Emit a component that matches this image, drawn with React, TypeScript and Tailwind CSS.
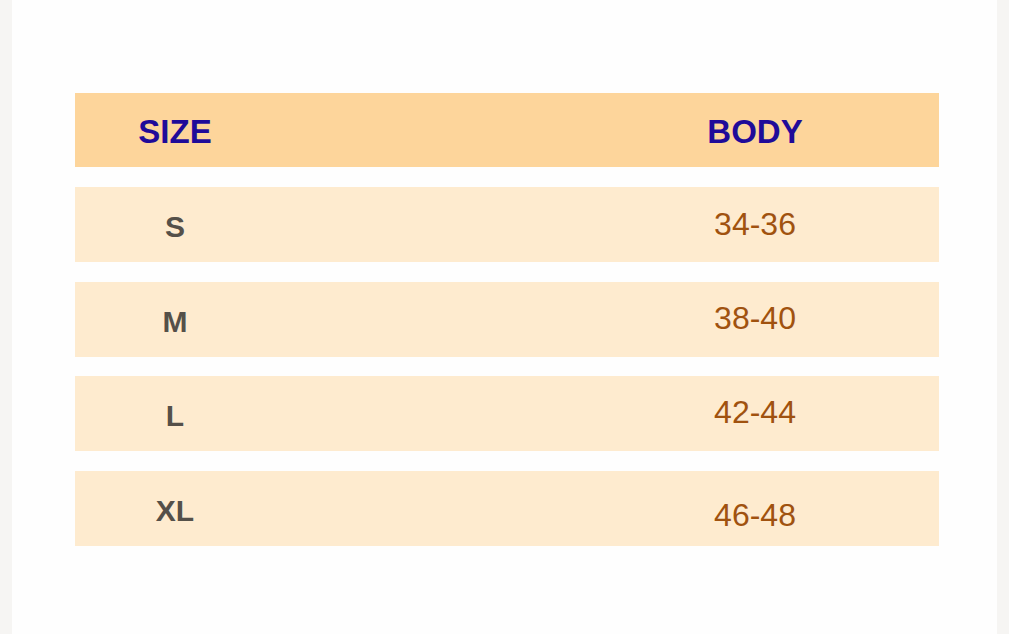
import React from "react";

const rows = [
  { size: "S", body: "34-36", nudge: "-translate-y-[1px]" },
  { size: "M", body: "38-40", nudge: "-translate-y-[1px]" },
  { size: "L", body: "42-44", nudge: "-translate-y-[2px]" },
  { size: "XL", body: "46-48", nudge: "translate-y-[7px]" },
];

export default function App() {
  return (
    <div
      className="flex h-[634px] w-[1009px] bg-[#fefefe]"
      style={{ fontFamily: '"Liberation Sans", Arial, sans-serif' }}
    >
      <div className="w-[12px] bg-[#f6f5f3]" />
      <div className="flex-1 pl-[63px] pr-[58px] pt-[93px]">
        <div className="flex flex-col gap-[19.5px]">
          <div className="mb-[0.5px] flex h-[74px] items-center bg-[#fdd59b]">
            <div className="w-[200px] translate-y-[2px] text-center text-[33px] font-bold text-[#1f0b99]">SIZE</div>
            <div className="ml-[380px] w-[200px] translate-y-[2px] text-center text-[33px] font-bold text-[#1f0b99]">BODY</div>
          </div>
          {rows.map((r) => (
            <div key={r.size} className="flex h-[75px] items-center bg-[#feebcf]">
              <div className="w-[200px] translate-y-[2px] text-center text-[30px] font-bold text-[#555049]">{r.size}</div>
              <div className={`ml-[380px] w-[200px] text-center text-[32px] text-[#a0520f] ${r.nudge}`}>{r.body}</div>
            </div>
          ))}
        </div>
      </div>
      <div className="w-[12px] bg-[#f6f5f3]" />
    </div>
  );
}
